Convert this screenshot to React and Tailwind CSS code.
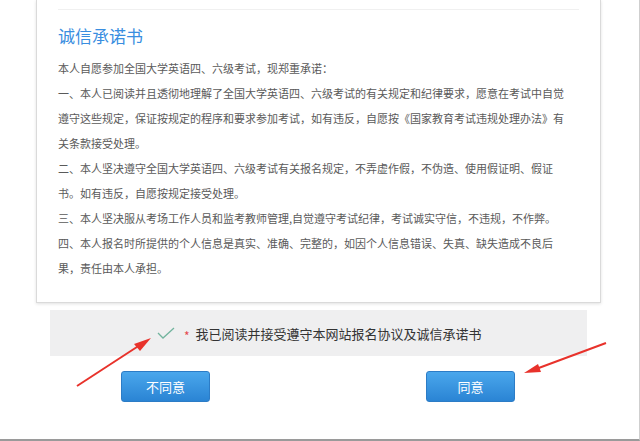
import React from "react";

const font = { fontFamily: '"Noto Sans CJK SC", "Noto Sans", sans-serif' };

export default function App() {
  const lines = [
    "本人自愿参加全国大学英语四、六级考试，现郑重承诺：",
    "一、本人已阅读并且透彻地理解了全国大学英语四、六级考试的有关规定和纪律要求，愿意在考试中自觉",
    "遵守这些规定，保证按规定的程序和要求参加考试，如有违反，自愿按《国家教育考试违规处理办法》有",
    "关条款接受处理。",
    "二、本人坚决遵守全国大学英语四、六级考试有关报名规定，不弄虚作假，不伪造、使用假证明、假证",
    "书。如有违反，自愿按规定接受处理。",
    "三、本人坚决服从考场工作人员和监考教师管理,自觉遵守考试纪律，考试诚实守信，不违规，不作弊。",
    "四、本人报名时所提供的个人信息是真实、准确、完整的，如因个人信息错误、失真、缺失造成不良后",
    "果，责任由本人承担。",
  ];
  return (
    <div
      style={font}
      className="relative w-[640px] h-[441px] overflow-hidden bg-white border-r border-[#cfcfcf] border-b-2 border-b-[#9a9a9a]"
    >
      <div className="ml-[36px] w-[565px] h-[303px] border-x border-b border-[#dadada] shadow-[0_1px_3px_rgba(0,0,0,0.12)] px-[21px] pt-[9px] bg-white">
        <div className="h-px bg-[#f0f0f0]" />
        <h2 className="mt-[16px] text-[17px] leading-[20px] text-[#3a8ee0] font-normal">
          诚信承诺书
        </h2>
        <div className="mt-[10px] text-[11px] leading-[25px] text-[#5a5a5a]">
          {lines.map((l, i) => (
            <div key={i} className="whitespace-nowrap">
              {l}
            </div>
          ))}
        </div>
      </div>

      <div className="ml-[50px] mt-[7px] w-[537px] h-[46px] bg-[#efeff0] flex items-center pl-[107px]">
        <svg width="18" height="13" viewBox="0 0 18 13" className="shrink-0">
          <polyline
            points="1,6 6,11 17,1"
            fill="none"
            stroke="#72b49e"
            strokeWidth="1.3"
          />
        </svg>
        <span className="ml-[9px] text-[12px] text-[#e5484d] leading-none mt-[5px]">*</span>
        <span className="ml-[6px] text-[13px] text-[#333] leading-none">
          我已阅读并接受遵守本网站报名协议及诚信承诺书
        </span>
      </div>

      <div className="flex mt-[15px]">
        <button className="ml-[121px] w-[89px] h-[31px] rounded-[3px] border border-[#2c7cc6] bg-gradient-to-b from-[#4aa7ec] to-[#2a84d4] text-white text-[13px]">
          不同意
        </button>
        <button className="ml-[216px] w-[89px] h-[31px] rounded-[3px] border border-[#2c7cc6] bg-gradient-to-b from-[#4aa7ec] to-[#2a84d4] text-white text-[13px]">
          同意
        </button>
      </div>

      <svg
        className="absolute inset-0 pointer-events-none"
        width="640"
        height="441"
        viewBox="0 0 640 441"
      >
        <line x1="77" y1="386" x2="140" y2="345" stroke="#e8322b" strokeWidth="2" />
        <polygon points="151,338 134,344 140,351" fill="#e8322b" />
        <line x1="606" y1="343" x2="536" y2="369" stroke="#e8322b" strokeWidth="2" />
        <polygon points="524,373 538,364 541,372" fill="#e8322b" />
      </svg>
    </div>
  );
}
